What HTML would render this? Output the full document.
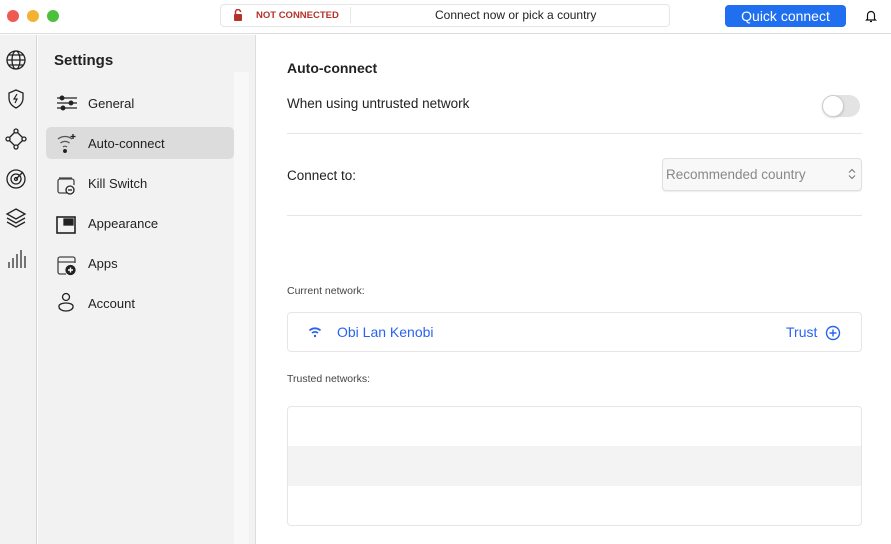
<!DOCTYPE html>
<html><head><style>
*{margin:0;padding:0;box-sizing:border-box}
body{width:891px;height:544px;overflow:hidden;background:#fff;font-family:"Liberation Sans",Helvetica,Arial,sans-serif;color:#222;position:relative}
.abs{position:absolute}
.dot{position:absolute;top:10px;width:12px;height:12px;border-radius:50%}
.txt{position:absolute;font-size:13px}
.nav{position:absolute;left:88px;font-size:13px;color:#222}
</style></head><body>
<!-- title bar -->
<div class="abs" style="left:0;top:0;width:891px;height:34px;background:#fff;border-bottom:1px solid #ddd"></div>
<div class="dot" style="left:7px;background:#ee5a52"></div>
<div class="dot" style="left:27px;background:#f5b232"></div>
<div class="dot" style="left:47px;background:#4cbf3f"></div>
<div class="abs" style="left:220px;top:4px;width:450px;height:23px;border:1px solid #e6e6e6;border-radius:4px;background:#fff"></div>
<svg class="abs" style="left:233px;top:9px" width="10" height="12" viewBox="0 0 10 12"><path d="M2.5 5V3a2.5 2.5 0 0 1 5 0" fill="none" stroke="#b5322a" stroke-width="1.5"/><rect x="1" y="5" width="8" height="7" rx="1" fill="#b5322a"/></svg>
<div class="abs" style="left:256px;top:10px;font-size:9.5px;font-weight:bold;color:#b5322a">NOT CONNECTED</div>
<div class="abs" style="left:350px;top:7px;width:1px;height:16px;background:#e6e6e6"></div>
<div class="abs" style="left:435px;top:8px;font-size:12px;color:#222">Connect now or pick a country</div>
<div class="abs" style="left:725px;top:5px;width:121px;height:22px;border-radius:4px;background:#1f6ff0;color:#fff;font-size:14px;text-align:center;line-height:22px">Quick connect</div>
<svg class="abs" style="left:865px;top:9px" width="12" height="14" viewBox="0 0 12 14"><path d="M2.5 10V6a3.5 3.5 0 0 1 7 0v4l1 1H1.5z M5 12.5h2" fill="none" stroke="#111" stroke-width="1.2"/></svg>
<!-- rail -->
<div class="abs" style="left:0;top:35px;width:37px;height:509px;background:#f2f2f2;border-right:1px solid #d6d6d6"></div>
<svg class="abs" style="left:4px;top:48px" width="24" height="240" viewBox="0 0 24 240" fill="none" stroke="#222" stroke-width="1.3">
<circle cx="12" cy="12" r="9"/><ellipse cx="12" cy="12" rx="4" ry="9"/><path d="M3 12h18M5 7h14M5 17h14"/>
<path d="M12 42l7 3v5c0 5-3 8-7 10c-4-2-7-5-7-10v-5z"/><path d="M13 46l-3 5h3l-2 4" stroke-width="1.2"/>
<circle cx="12" cy="83" r="2"/><circle cx="4" cy="91" r="2"/><circle cx="20" cy="91" r="2"/><circle cx="12" cy="99" r="2"/><path d="M10.5 84.5l-5 5M13.5 84.5l5 5M5.5 92.5l5 5M18.5 92.5l-5 5"/>
<circle cx="12" cy="131" r="9"/><circle cx="12" cy="131" r="5"/><circle cx="12" cy="131" r="1.5"/><path d="M12 131l7-7"/>
<path d="M12 161l9 5-9 5-9-5z M3 170l9 5 9-5 M3 174l9 5 9-5"/>
<path d="M5 220v-6M9 220v-10M13 220v-14M17 220v-18M21 220v-12" stroke-width="1.2"/>
</svg>
<!-- settings sidebar -->
<div class="abs" style="left:38px;top:35px;width:218px;height:509px;background:#f2f2f2;border-right:1px solid #ddd"></div>
<div class="abs" style="left:234px;top:72px;width:15px;height:472px;background:#f8f8f8"></div>
<div class="abs" style="left:54px;top:52px;font-size:15px;font-weight:bold;color:#222">Settings</div>
<div class="abs" style="left:46px;top:127px;width:188px;height:32px;border-radius:5px;background:#dcdcdc"></div>
<svg class="abs" style="left:55px;top:92px" width="24" height="224" viewBox="0 0 24 224" fill="none" stroke="#222" stroke-width="1.3">
<path d="M2 6h20M2 11h20M2 16h20"/><circle cx="7" cy="6" r="1.8" fill="#222"/><circle cx="16" cy="11" r="1.8" fill="#222"/><circle cx="8" cy="16" r="1.8" fill="#222"/>
<path d="M3 47a11 11 0 0 1 14 0M5.5 51a7 7 0 0 1 9 0M8 55a3 3 0 0 1 4 0" stroke="#555"/><circle cx="10" cy="59" r="1.3" fill="#222"/><path d="M18 42v5M15.5 44.5h5"/>
<path d="M4 86h13M3 99v-10a2 2 0 0 1 2-2h12a2 2 0 0 1 2 2v4M3 99a2 2 0 0 0 2 2h7" stroke="#444"/><circle cx="15" cy="98" r="4"/><path d="M13 98h4"/>
<rect x="2" y="125" width="18" height="16" stroke-width="1.6"/><rect x="9" y="127" width="9" height="6" fill="#222"/>
<path d="M3 170h17M3 180v-13a2 2 0 0 1 2-2h13a2 2 0 0 1 2 2v4M3 180a2 2 0 0 0 2 2h6" stroke="#444"/><circle cx="15.5" cy="178" r="4.5" fill="#222"/><path d="M13 178h5M15.5 175.5v5" stroke="#fff" stroke-width="1.4"/>
<circle cx="11" cy="205" r="3.5"/><path d="M4 214a7 3 0 0 1 14 0v1a7 4 0 0 1-14 0z"/>
</svg>
<div class="nav" style="top:96px">General</div>
<div class="nav" style="top:136px">Auto-connect</div>
<div class="nav" style="top:176px">Kill Switch</div>
<div class="nav" style="top:216px">Appearance</div>
<div class="nav" style="top:256px">Apps</div>
<div class="nav" style="top:296px">Account</div>
<!-- content -->
<div class="abs" style="left:287px;top:60px;font-size:14px;font-weight:bold">Auto-connect</div>
<div class="txt" style="left:287px;top:96px;font-size:13.5px">When using untrusted network</div>
<div class="abs" style="left:822px;top:95px;width:38px;height:22px;border-radius:11px;background:#e3e3e3"></div>
<div class="abs" style="left:822px;top:95px;width:22px;height:22px;border-radius:50%;background:#fff;border:1px solid #ccc;box-shadow:0 1px 2px rgba(0,0,0,.15)"></div>
<div class="abs" style="left:287px;top:133px;width:575px;height:1px;background:#e6e6e6"></div>
<div class="txt" style="left:287px;top:168px;font-size:13.5px">Connect to:</div>
<div class="abs" style="left:662px;top:158px;width:200px;height:33px;border:1px solid #e0e0e0;border-radius:4px;background:#f8f8f8;box-shadow:0 1px 1px rgba(0,0,0,.08)"></div>
<div class="abs" style="left:666px;top:167px;font-size:13.5px;color:#888">Recommended country</div>
<svg class="abs" style="left:848px;top:168px" width="8" height="12" viewBox="0 0 8 12" fill="none" stroke="#777" stroke-width="1.1"><path d="M1 4.5l3-3 3 3M1 7.5l3 3 3-3"/></svg>
<div class="abs" style="left:287px;top:215px;width:575px;height:1px;background:#e6e6e6"></div>
<div class="abs" style="left:287px;top:285px;font-size:10.5px;color:#444">Current network:</div>
<div class="abs" style="left:287px;top:312px;width:575px;height:40px;border:1px solid #e6e6e6;border-radius:4px"></div>
<svg class="abs" style="left:308px;top:326px" width="14" height="12" viewBox="0 0 14 12" fill="none" stroke="#2b63f0" stroke-width="1.8"><path d="M1.5 4.5a8 8 0 0 1 11 0M4 7a4.5 4.5 0 0 1 6 0"/><circle cx="7" cy="10" r="1.2" fill="#2b63f0" stroke="none"/></svg>
<div class="abs" style="left:337px;top:324px;font-size:14px;color:#2b63f0">Obi Lan Kenobi</div>
<div class="abs" style="left:786px;top:324px;font-size:14px;color:#2b63f0">Trust</div>
<svg class="abs" style="left:825px;top:325px" width="16" height="16" viewBox="0 0 16 16" fill="none" stroke="#2b63f0" stroke-width="1.4"><circle cx="8" cy="8" r="6.5"/><path d="M8 4.5v7M4.5 8h7"/></svg>
<div class="abs" style="left:287px;top:373px;font-size:10.5px;color:#444">Trusted networks:</div>
<div class="abs" style="left:287px;top:406px;width:575px;height:120px;border:1px solid #e6e6e6;border-radius:4px;overflow:hidden"><div style="margin-top:39px;height:40px;background:#f2f3f2"></div></div>
</body></html>
